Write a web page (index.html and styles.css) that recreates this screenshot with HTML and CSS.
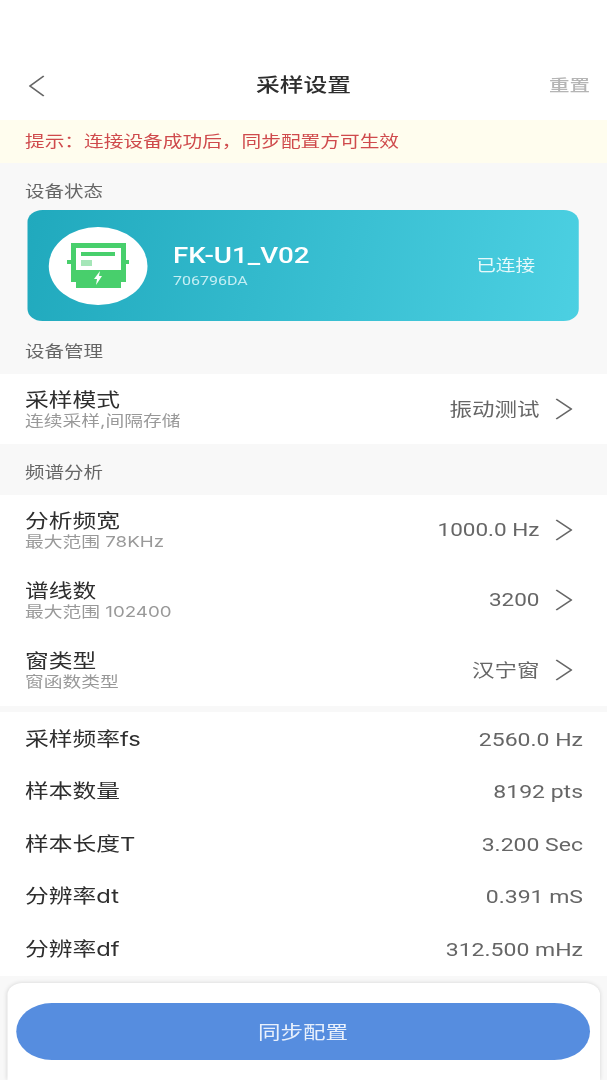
FILE: index.html
```html
<!DOCTYPE html>
<html lang="zh-CN">

<head>
    <meta charset="UTF-8">
    <meta name="viewport" content="width=device-width, initial-scale=1.0">
    <title>采样设置</title>
    <link rel="stylesheet" href="styles.css">
</head>

<body>
    <div class="page">
        <div class="header">
            <svg class="back" width="13" height="22" viewBox="0 0 13 22">
                <path d="M12 1 L1 11 L12 21" />
            </svg>
            <div class="title">采样设置</div>
            <div class="reset">重置</div>
        </div>

        <div class="notice">提示：连接设备成功后，同步配置方可生效</div>

        <div class="section-label first">设备状态</div>
        <div class="device-wrap">
            <div class="device">
                <div class="device-icon">
                    <svg width="56" height="52" viewBox="43.5 35 70 52" preserveAspectRatio="none">
                        <path class="meter" d="M52 38 H107 V55 H110 V59 H107 V77 H102 V83 H57 V77 H52 V59 H48 V55 H52 Z" />
                        <rect class="screen" x="57" y="43" width="45" height="22" />
                        <rect class="meter" x="62" y="47" width="34" height="4" />
                        <rect class="chip" x="62" y="55" width="11" height="6" />
                        <path class="bolt" d="M81 66 L75 74 H78 L77 80 L83 71 H80 Z" />
                    </svg>
                </div>
                <div class="device-info">
                    <div class="device-name">FK-U1_V02</div>
                    <div class="device-id">706796DA</div>
                </div>
                <div class="device-status">已连接</div>
            </div>
        </div>

        <div class="section-label second">设备管理</div>
        <div class="group">
            <div class="row">
                <div>
                    <div class="row-title">采样模式</div>
                    <div class="row-sub">连续采样,间隔存储</div>
                </div>
                <div class="row-value">振动测试</div>
                <svg class="arrow" width="14" height="24" viewBox="0 0 14 24"><path d="M1 2 L13 12 L1 22" /></svg>
            </div>
        </div>

        <div class="section-label third">频谱分析</div>
        <div class="group spectrum">
            <div class="row">
                <div>
                    <div class="row-title">分析频宽</div>
                    <div class="row-sub">最大范围 78KHz</div>
                </div>
                <div class="row-value">1000.0 Hz</div>
                <svg class="arrow" width="14" height="24" viewBox="0 0 14 24"><path d="M1 2 L13 12 L1 22" /></svg>
            </div>
            <div class="row">
                <div>
                    <div class="row-title">谱线数</div>
                    <div class="row-sub">最大范围 102400</div>
                </div>
                <div class="row-value">3200</div>
                <svg class="arrow" width="14" height="24" viewBox="0 0 14 24"><path d="M1 2 L13 12 L1 22" /></svg>
            </div>
            <div class="row">
                <div>
                    <div class="row-title">窗类型</div>
                    <div class="row-sub">窗函数类型</div>
                </div>
                <div class="row-value">汉宁窗</div>
                <svg class="arrow" width="14" height="24" viewBox="0 0 14 24"><path d="M1 2 L13 12 L1 22" /></svg>
            </div>
        </div>

        <div class="group results">
            <div class="result"><span class="result-name">采样频率fs</span><span class="result-value">2560.0 Hz</span></div>
            <div class="result"><span class="result-name">样本数量</span><span class="result-value">8192 pts</span></div>
            <div class="result"><span class="result-name">样本长度T</span><span class="result-value">3.200 Sec</span></div>
            <div class="result"><span class="result-name">分辨率dt</span><span class="result-value">0.391 mS</span></div>
            <div class="result"><span class="result-name">分辨率df</span><span class="result-value">312.500 mHz</span></div>
        </div>

        <div class="footer">
            <button class="sync">同步配置</button>
        </div>
    </div>
</body>

</html>
```

FILE: styles.css
```css
* {
    padding: 0;
    margin: 0;
    box-sizing: border-box;
}

html,
body {
    overflow: hidden;
}

body {
    font-family: "Inter", "Noto Sans CJK SC", sans-serif;
    background-color: #f8f8f8;
}

/* the screenshot is stretched sideways, so the whole page is laid out narrow and widened */
.page {
    width: 485.6px;
    height: 1080px;
    overflow: hidden;
    display: flex;
    flex-direction: column;
    transform: scaleX(1.25);
    transform-origin: left top;
    filter: blur(0.4px);
}

.header {
    height: 120px;
    background-color: #fff;
    padding: 71px 13.6px 0 23.2px;
    display: flex;
    justify-content: space-between;
    align-items: flex-start;
    position: relative;
}

.back {
    margin-top: 4px;
}

.back path,
.arrow path {
    fill: none;
    stroke: #666;
    stroke-width: 1.5;
}

.title {
    position: absolute;
    left: 0;
    right: 0;
    top: 71px;
    text-align: center;
    font-size: 19px;
    line-height: 30px;
    font-weight: 500;
    color: #2e2e2e;
}

.reset {
    font-size: 16.4px;
    line-height: 28px;
    font-weight: 500;
    color: #b5b5b5;
}

.notice {
    height: 43px;
    line-height: 43px;
    padding-left: 20px;
    background-color: #fffdee;
    color: #cf4a4c;
    font-size: 15.75px;
}

.section-label {
    padding-left: 20px;
    font-size: 15.6px;
    line-height: 22px;
    color: #666;
}

.section-label.first {
    padding-top: 18px;
    height: 47px;
}

.section-label.second {
    padding-top: 20px;
    height: 53px;
}

.section-label.third {
    padding-top: 18px;
    height: 51px;
}

.device-wrap {
    padding: 0 22.4px 0 21.6px;
}

.device {
    height: 111px;
    border-radius: 12px;
    background: linear-gradient(100deg, #20a9bd, #4cd0e2);
    display: flex;
    align-items: center;
    padding-left: 17.6px;
    color: #fff;
}

.device-icon {
    width: 78.4px;
    height: 78px;
    border-radius: 50%;
    background-color: #fff;
    display: flex;
    align-items: center;
    justify-content: center;
}

.meter {
    fill: #48cf6c;
}

.screen {
    fill: #fff;
}

.chip {
    fill: #a5e6b8;
}

.bolt {
    fill: #fff;
}

.device-info {
    margin-left: 20.8px;
    flex: 1;
}

.device-name {
    font-family: "Roboto", "Noto Sans CJK SC", sans-serif;
    font-size: 22.2px;
    line-height: 30px;
    font-weight: 500;
}

.device-id {
    font-family: "Roboto", "Noto Sans CJK SC", sans-serif;
    font-size: 12.8px;
    line-height: 21px;
    color: #c4eef4;
}

.device-status {
    font-size: 15.7px;
    margin: 0 35.2px 2px 0;
    color: #e6f9fb;
}

.group {
    background-color: #fff;
}

.spectrum {
    padding-bottom: 1px;
}

.row {
    height: 70px;
    padding: 0 28px 0 20px;
    display: flex;
    align-items: center;
}

.row > div:first-child {
    flex: 1;
}

.row-title {
    font-size: 19px;
    line-height: 22px;
    color: #2e2e2e;
}

.row-sub {
    font-size: 15px;
    line-height: 17px;
    color: #999;
}

.row-value {
    font-family: "Roboto", "Noto Sans CJK SC", sans-serif;
    font-size: 18px;
    color: #666;
    margin: 0 12px 2px 0;
}

.results {
    margin-top: 6px;
    padding-top: 1.5px;
}

.result {
    height: 52.6px;
    padding: 0 19.2px 0 20px;
    display: flex;
    justify-content: space-between;
    align-items: baseline;
    line-height: 52.6px;
}

.result-name {
    font-size: 19px;
    color: #2e2e2e;
}

.result-value {
    font-family: "Roboto", "Noto Sans CJK SC", sans-serif;
    font-size: 18.4px;
    color: #666;
}

.footer {
    margin: 6.5px 5.6px 0;
    flex: 1;
    background-color: #fff;
    border-radius: 12px 12px 0 0;
    box-shadow: 0 0 4px rgba(0, 0, 0, 0.15);
    padding: 20px 8px 0 7.2px;
}

.sync {
    width: 100%;
    height: 57px;
    border: none;
    border-radius: 29px;
    background-color: #568ddf;
    color: #e8f0fc;
    font-family: inherit;
    font-size: 18px;
}
```
